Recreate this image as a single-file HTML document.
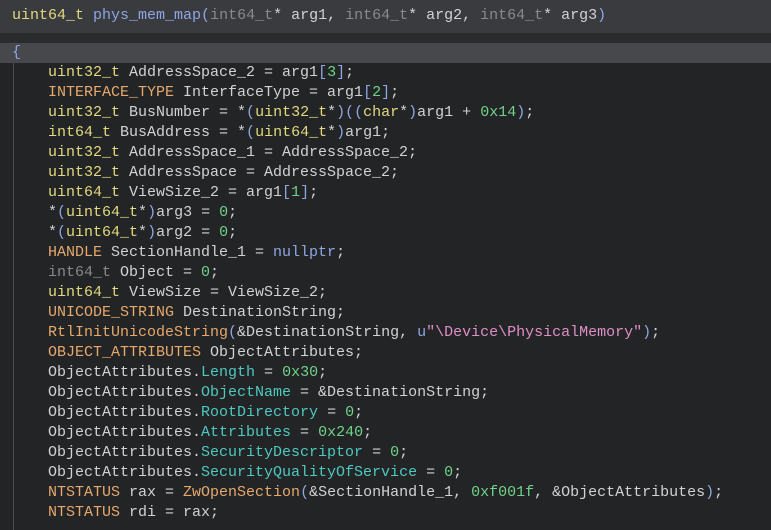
<!DOCTYPE html><html><head><style>
body{margin:0;width:771px;height:530px;background:#232426;overflow:hidden;font-family:"Liberation Mono","DejaVu Sans Mono",monospace;font-size:15px;color:#d2d2d2}
.h{position:absolute;left:0;top:0;width:771px;height:33px;background:#393b3e}
.g{position:absolute;left:0;top:33px;width:771px;height:10px;background:#2a2b2d}
.hl{position:absolute;left:0;top:43px;width:771px;height:20px;background:#46484b}
.l{position:absolute;left:0;white-space:pre;height:20px;line-height:20px}
.vl{position:absolute;left:13px;top:63px;width:1px;height:467px;background:#4a4b4d}
.y{color:#e3d97e}.o{color:#e6a86c}.b{color:#8ea6e4}.n{color:#6fd389}.gr{color:#8a8a8a}.t{color:#4ec9c0}.p{color:#df8fc6}
</style></head><body>
<div class="h"></div><div class="g"></div><div class="hl"></div><div class="vl"></div>
<div class="l" style="left:12px;top:6px"><span class="y">uint64_t</span> <span class="b">phys_mem_map(</span><span class="gr">int64_t</span>* arg1, <span class="gr">int64_t</span>* arg2, <span class="gr">int64_t</span>* arg3<span class="b">)</span></div>
<div class="l b" style="left:12px;top:43px">{</div>
<div style="position:absolute;left:48px;top:63px">
<div class="l" style="top:0"><span class="y">uint32_t</span> AddressSpace_2 = arg1<span class="b">[</span><span class="n">3</span><span class="b">]</span>;</div>
<div class="l" style="top:20px"><span class="o">INTERFACE_TYPE</span> InterfaceType = arg1<span class="b">[</span><span class="n">2</span><span class="b">]</span>;</div>
<div class="l" style="top:40px"><span class="y">uint32_t</span> BusNumber = *<span class="b">(</span><span class="y">uint32_t</span>*<span class="b">)</span><span class="b">((</span><span class="y">char</span>*<span class="b">)</span>arg1 + <span class="n">0x14</span><span class="b">)</span>;</div>
<div class="l" style="top:60px"><span class="y">int64_t</span> BusAddress = *<span class="b">(</span><span class="y">uint64_t</span>*<span class="b">)</span>arg1;</div>
<div class="l" style="top:80px"><span class="y">uint32_t</span> AddressSpace_1 = AddressSpace_2;</div>
<div class="l" style="top:100px"><span class="y">uint32_t</span> AddressSpace = AddressSpace_2;</div>
<div class="l" style="top:120px"><span class="y">uint64_t</span> ViewSize_2 = arg1<span class="b">[</span><span class="n">1</span><span class="b">]</span>;</div>
<div class="l" style="top:140px">*<span class="b">(</span><span class="y">uint64_t</span>*<span class="b">)</span>arg3 = <span class="n">0</span>;</div>
<div class="l" style="top:160px">*<span class="b">(</span><span class="y">uint64_t</span>*<span class="b">)</span>arg2 = <span class="n">0</span>;</div>
<div class="l" style="top:180px"><span class="o">HANDLE</span> SectionHandle_1 = <span class="b">nullptr</span>;</div>
<div class="l" style="top:200px"><span class="gr">int64_t</span> Object = <span class="n">0</span>;</div>
<div class="l" style="top:220px"><span class="y">uint64_t</span> ViewSize = ViewSize_2;</div>
<div class="l" style="top:240px"><span class="o">UNICODE_STRING</span> DestinationString;</div>
<div class="l" style="top:260px"><span class="o">RtlInitUnicodeString</span><span class="b">(</span>&amp;DestinationString, <span class="b">u</span><span class="p">"\Device\PhysicalMemory"</span><span class="b">)</span>;</div>
<div class="l" style="top:280px"><span class="o">OBJECT_ATTRIBUTES</span> ObjectAttributes;</div>
<div class="l" style="top:300px">ObjectAttributes.<span class="t">Length</span> = <span class="n">0x30</span>;</div>
<div class="l" style="top:320px">ObjectAttributes.<span class="t">ObjectName</span> = &amp;DestinationString;</div>
<div class="l" style="top:340px">ObjectAttributes.<span class="t">RootDirectory</span> = <span class="n">0</span>;</div>
<div class="l" style="top:360px">ObjectAttributes.<span class="t">Attributes</span> = <span class="n">0x240</span>;</div>
<div class="l" style="top:380px">ObjectAttributes.<span class="t">SecurityDescriptor</span> = <span class="n">0</span>;</div>
<div class="l" style="top:400px">ObjectAttributes.<span class="t">SecurityQualityOfService</span> = <span class="n">0</span>;</div>
<div class="l" style="top:420px"><span class="o">NTSTATUS</span> rax = <span class="o">ZwOpenSection</span><span class="b">(</span>&amp;SectionHandle_1, <span class="n">0xf001f</span>, &amp;ObjectAttributes<span class="b">)</span>;</div>
<div class="l" style="top:440px"><span class="o">NTSTATUS</span> rdi = rax;</div>
</div>
</body></html>
